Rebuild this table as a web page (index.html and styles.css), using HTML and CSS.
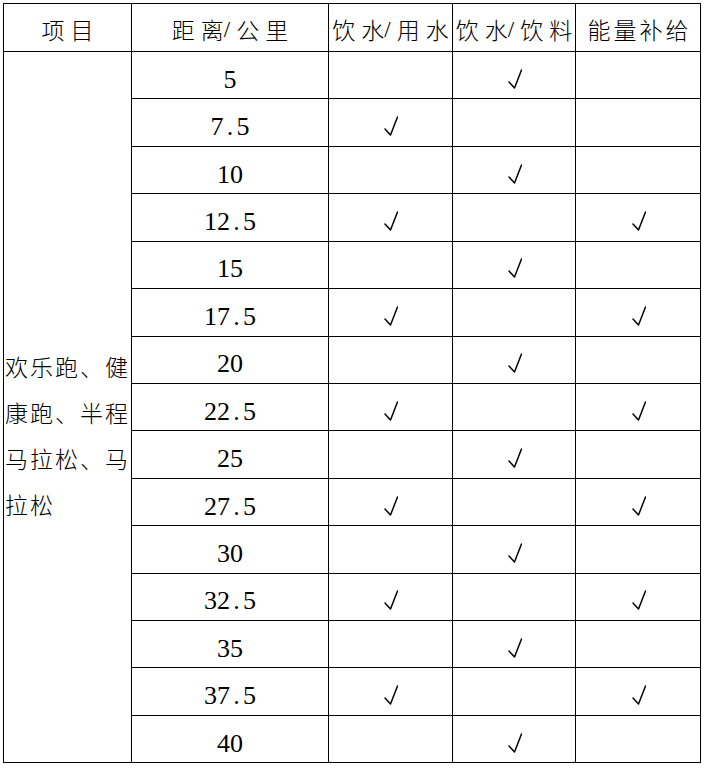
FILE: index.html
```html
<!DOCTYPE html>
<html lang="zh">
<head>
<meta charset="utf-8">
<title>补给站</title>
<link rel="stylesheet" href="styles.css">
</head>
<body>
<div class="tbl">
  <div class="cell hd">项目</div>
  <div class="cell hd">距<span class="pre">离</span><span class="sl">/</span>公里</div>
  <div class="cell hd">饮<span class="pre">水</span><span class="sl">/</span>用水</div>
  <div class="cell hd">饮<span class="pre">水</span><span class="sl">/</span>饮料</div>
  <div class="cell hd tight">能量补给</div>
  <div class="cell proj">欢乐跑、健<br>康跑、半程<br>马拉松、马<br>拉松</div>

  <div class="cell num">5</div><div class="cell"></div><div class="cell ck"><svg viewBox="0 0 14 21" class="chk"><path d="M1 14 L6.5 20 L13.5 2"/></svg></div><div class="cell"></div>
  <div class="cell num">7<span class="dot">.</span>5</div><div class="cell ck"><svg viewBox="0 0 14 21" class="chk"><path d="M1 14 L6.5 20 L13.5 2"/></svg></div><div class="cell"></div><div class="cell"></div>
  <div class="cell num">10</div><div class="cell"></div><div class="cell ck"><svg viewBox="0 0 14 21" class="chk"><path d="M1 14 L6.5 20 L13.5 2"/></svg></div><div class="cell"></div>
  <div class="cell num">12<span class="dot">.</span>5</div><div class="cell ck"><svg viewBox="0 0 14 21" class="chk"><path d="M1 14 L6.5 20 L13.5 2"/></svg></div><div class="cell"></div><div class="cell ck"><svg viewBox="0 0 14 21" class="chk"><path d="M1 14 L6.5 20 L13.5 2"/></svg></div>
  <div class="cell num">15</div><div class="cell"></div><div class="cell ck"><svg viewBox="0 0 14 21" class="chk"><path d="M1 14 L6.5 20 L13.5 2"/></svg></div><div class="cell"></div>
  <div class="cell num">17<span class="dot">.</span>5</div><div class="cell ck"><svg viewBox="0 0 14 21" class="chk"><path d="M1 14 L6.5 20 L13.5 2"/></svg></div><div class="cell"></div><div class="cell ck"><svg viewBox="0 0 14 21" class="chk"><path d="M1 14 L6.5 20 L13.5 2"/></svg></div>
  <div class="cell num">20</div><div class="cell"></div><div class="cell ck"><svg viewBox="0 0 14 21" class="chk"><path d="M1 14 L6.5 20 L13.5 2"/></svg></div><div class="cell"></div>
  <div class="cell num">22<span class="dot">.</span>5</div><div class="cell ck"><svg viewBox="0 0 14 21" class="chk"><path d="M1 14 L6.5 20 L13.5 2"/></svg></div><div class="cell"></div><div class="cell ck"><svg viewBox="0 0 14 21" class="chk"><path d="M1 14 L6.5 20 L13.5 2"/></svg></div>
  <div class="cell num">25</div><div class="cell"></div><div class="cell ck"><svg viewBox="0 0 14 21" class="chk"><path d="M1 14 L6.5 20 L13.5 2"/></svg></div><div class="cell"></div>
  <div class="cell num">27<span class="dot">.</span>5</div><div class="cell ck"><svg viewBox="0 0 14 21" class="chk"><path d="M1 14 L6.5 20 L13.5 2"/></svg></div><div class="cell"></div><div class="cell ck"><svg viewBox="0 0 14 21" class="chk"><path d="M1 14 L6.5 20 L13.5 2"/></svg></div>
  <div class="cell num">30</div><div class="cell"></div><div class="cell ck"><svg viewBox="0 0 14 21" class="chk"><path d="M1 14 L6.5 20 L13.5 2"/></svg></div><div class="cell"></div>
  <div class="cell num">32<span class="dot">.</span>5</div><div class="cell ck"><svg viewBox="0 0 14 21" class="chk"><path d="M1 14 L6.5 20 L13.5 2"/></svg></div><div class="cell"></div><div class="cell ck"><svg viewBox="0 0 14 21" class="chk"><path d="M1 14 L6.5 20 L13.5 2"/></svg></div>
  <div class="cell num">35</div><div class="cell"></div><div class="cell ck"><svg viewBox="0 0 14 21" class="chk"><path d="M1 14 L6.5 20 L13.5 2"/></svg></div><div class="cell"></div>
  <div class="cell num">37<span class="dot">.</span>5</div><div class="cell ck"><svg viewBox="0 0 14 21" class="chk"><path d="M1 14 L6.5 20 L13.5 2"/></svg></div><div class="cell"></div><div class="cell ck"><svg viewBox="0 0 14 21" class="chk"><path d="M1 14 L6.5 20 L13.5 2"/></svg></div>
  <div class="cell num">40</div><div class="cell"></div><div class="cell ck"><svg viewBox="0 0 14 21" class="chk"><path d="M1 14 L6.5 20 L13.5 2"/></svg></div><div class="cell"></div>
</div>
</body>
</html>
```

FILE: styles.css
```css
html, body {
  margin: 0;
  padding: 0;
  background: #fff;
}

body {
  padding: 3px 0 0 3px;
  font-family: "Noto Sans CJK SC", "Noto Sans", sans-serif;
  color: #000;
}

.tbl {
  display: grid;
  grid-template-columns: 127px 196px 123px 122px 124px;
  grid-template-rows: 47px repeat(15, 46.43px);
  gap: 1px;
  padding: 1px;
  background: #000;
  width: max-content;
}

.cell {
  background: #fff;
  display: flex;
  align-items: center;
  justify-content: center;
  box-sizing: border-box;
}

.hd {
  font-size: 23px;
  font-weight: 300;
  letter-spacing: 6px;
  padding-left: 6px;
  padding-top: 4px;
  line-height: 1;
  white-space: nowrap;
}

.hd.tight {
  letter-spacing: 3px;
  padding-left: 3px;
}

.pre {
  letter-spacing: 0;
}

.sl {
  font-family: "Liberation Serif", serif;
  letter-spacing: 0;
  margin-right: 6px;
}

.proj {
  grid-column: 1;
  grid-row: 2 / span 15;
  display: block;
  font-size: 23px;
  font-weight: 300;
  letter-spacing: 2px;
  line-height: 46px;
  padding: 291px 0 0 1px;
  white-space: nowrap;
}

.num {
  font-family: "Liberation Serif", serif;
  font-size: 26px;
  line-height: 1;
  padding-top: 9px;
}

.dot {
  display: inline-block;
  width: 13px;
  text-align: center;
}

.chk {
  width: 14px;
  height: 21px;
  margin: 6px 0 0 1px;
  fill: none;
  stroke: #000;
  stroke-width: 1.5;
  stroke-linecap: round;
  stroke-linejoin: round;
}
```
